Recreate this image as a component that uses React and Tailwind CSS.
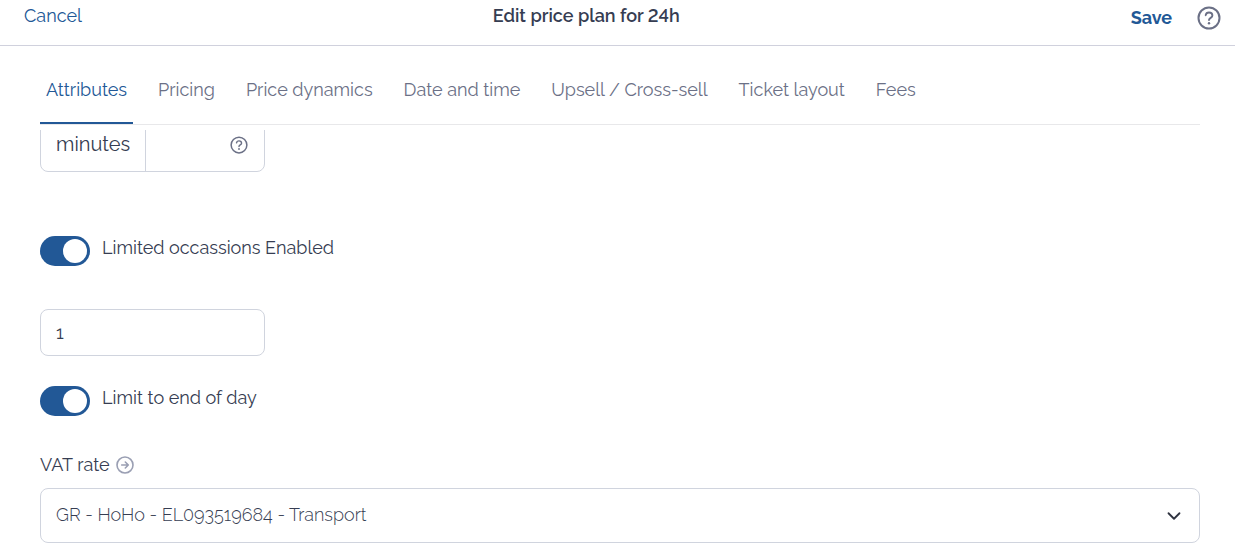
import React, { useState } from 'react';
import { ChevronDown } from 'lucide-react';

const tabs = [
  'Attributes',
  'Pricing',
  'Price dynamics',
  'Date and time',
  'Upsell / Cross-sell',
  'Ticket layout',
  'Fees',
];

const HelpIcon = ({ className }) => (
  <svg viewBox="0 0 24 24" fill="none" stroke="currentColor" strokeLinecap="round" className={className} aria-hidden="true">
    <circle cx="12" cy="12" r="10.5" strokeWidth="2" />
    <path d="M8.7 9.2c.3-1.7 1.6-2.7 3.3-2.7 1.9 0 3.4 1.2 3.4 3 0 2.3-3.4 2.4-3.4 4.5" strokeWidth="1.9" />
    <circle cx="12" cy="17.3" r="1.2" fill="currentColor" stroke="none" />
  </svg>
);

const ArrowIcon = () => (
  <svg viewBox="0 0 18 18" fill="none" stroke="currentColor" strokeLinecap="round" strokeLinejoin="round" className="size-[18px]" aria-hidden="true">
    <circle cx="9" cy="9" r="8" strokeWidth="1.6" />
    <path d="M5.7 9h6.6M9.3 6l3 3-3 3" strokeWidth="1.6" />
  </svg>
);

const Toggle = ({ id, label, checked, onChange }) => (
  <div className="flex items-start gap-3">
    <input
      id={id}
      type="checkbox"
      role="switch"
      checked={checked}
      onChange={(e) => onChange(e.target.checked)}
      className="h-[30px] w-[50px] shrink-0 cursor-pointer appearance-none rounded-full bg-gray-300 p-[3px] before:block before:size-6 before:rounded-full before:bg-white checked:bg-[#225896] checked:pl-[23px]"
    />
    <label htmlFor={id} className="text-lg leading-6">{label}</label>
  </div>
);

const App = () => {
  const [activeTab, setActiveTab] = useState('Attributes');
  const [limited, setLimited] = useState(true);
  const [endOfDay, setEndOfDay] = useState(true);
  const [occasions, setOccasions] = useState('1');

  return (
    <div className="bg-white font-[Raleway,Lato,sans-serif] text-[#363d52]">
      <header className="flex h-[46px] items-start border-b border-[#d0d1dd] pr-[14px] pl-6">
        <button type="button" className="pt-1 text-lg leading-6 text-[#225896]">Cancel</button>
        <h1 className="flex-1 pt-1 text-center text-lg leading-6 font-semibold lining-nums">Edit price plan for 24h</h1>
        <div className="flex items-center gap-[25px] pt-[6px] pl-10">
          <button type="button" className="text-lg leading-6 font-bold text-[#225896]">Save</button>
          <button type="button" aria-label="Help" className="text-[#6b7086]">
            <HelpIcon className="size-6" />
          </button>
        </div>
      </header>

      <main className="pr-[35px] pl-10">
        <nav role="tablist" className="mt-5 flex gap-[19px] border-b border-[#e8e8ea]">
          {tabs.map((tab) => (
            <button
              key={tab}
              type="button"
              role="tab"
              aria-selected={tab === activeTab}
              onClick={() => setActiveTab(tab)}
              className={`h-[58px] border-b-2 px-[6px] pb-2 text-lg ${
                tab === activeTab ? 'border-[#225896] text-[#225896]' : 'border-transparent text-[#6b7086]'
              }`}
            >
              {tab}
            </button>
          ))}
        </nav>

        <div className="mt-[5px] flex h-[42px] items-end overflow-hidden">
          <div className="flex h-14 w-[225px] shrink-0 rounded-lg border border-[#d0d4de]">
            <label htmlFor="minutes" className="flex w-[105px] shrink-0 items-center border-r border-[#d0d4de] pl-[15px] text-xl">
              minutes
            </label>
            <input id="minutes" type="text" className="min-w-0 flex-1 px-3 outline-none" />
            <button type="button" aria-label="Help for minutes" className="pt-[2px] pr-4 text-[#6b7086]">
              <HelpIcon className="size-[18px]" />
            </button>
          </div>
        </div>

        <div className="mt-16">
          <Toggle id="limited" label="Limited occassions Enabled" checked={limited} onChange={setLimited} />
        </div>

        <input
          type="text"
          aria-label="Number of occassions"
          value={occasions}
          onChange={(e) => setOccasions(e.target.value)}
          className="mt-[43px] block h-[47px] w-[225px] rounded-lg border border-[#d0d4de] px-[15px] text-lg outline-none"
        />

        <div className="mt-[30px]">
          <Toggle id="end-of-day" label="Limit to end of day" checked={endOfDay} onChange={setEndOfDay} />
        </div>

        <div className="mt-[37px] flex items-center gap-[6px]">
          <label htmlFor="vat" className="text-lg leading-6">VAT rate</label>
          <a href="#vat" aria-label="Go to VAT rates" className="text-[#9a9fb3]">
            <ArrowIcon />
          </a>
        </div>
        <div className="mt-[11px] grid items-center">
          <select
            id="vat"
            className="col-start-1 row-start-1 h-[55px] w-full appearance-none rounded-lg border border-[#d0d4de] bg-white px-[15px] pb-[2px] text-lg font-light outline-none"
          >
            <option>GR - HoHo - EL093519684 - Transport</option>
          </select>
          <ChevronDown className="pointer-events-none col-start-1 row-start-1 mr-[15px] size-[22px] justify-self-end text-[#2f3340]" />
        </div>
      </main>
    </div>
  );
};

export default App;
